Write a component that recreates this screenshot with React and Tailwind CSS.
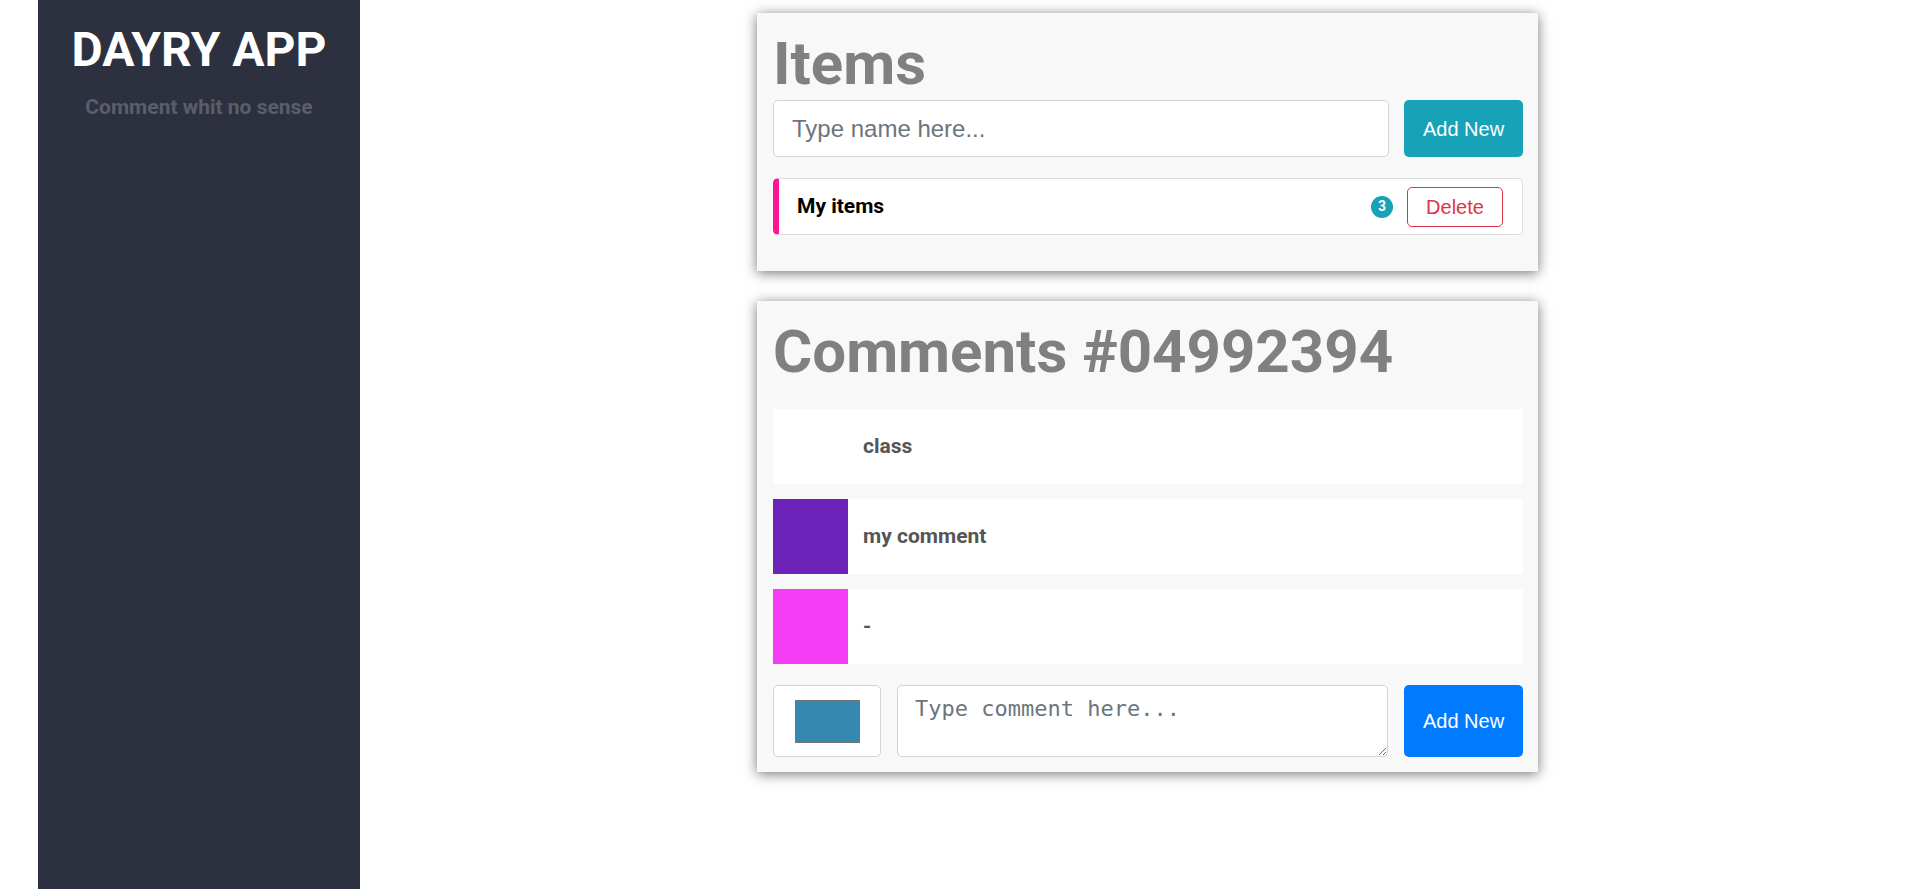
import React from "react";

const rows = [
  { color: "transparent", text: "class" },
  { color: "#6c21b9", text: "my comment" },
  { color: "#f33cf3", text: "-" },
];

export default function App() {
  return (
    <div className="flex min-h-screen bg-white" style={{ fontFamily: "Roboto, 'Liberation Sans', sans-serif" }}>
      <div className="w-[38px] shrink-0" />
      <aside className="w-[322px] shrink-0 bg-[#2d303e] text-center min-h-[889px]">
        <h1 className="mt-[21px] text-[48px] leading-[58px] font-bold text-white" style={{ fontFamily: "Roboto, sans-serif" }}>
          DAYRY APP
        </h1>
        <p className="mt-[16px] text-[21px] leading-[24px] font-bold text-[#5a5e6b]">Comment whit no sense</p>
      </aside>
      <main className="flex-1">
        <div className="ml-[397px] w-[781px] pt-[13px] flex flex-col gap-[30px]">
          {/* Items card */}
          <section className="bg-[#f8f8f8] shadow-[0_2px_12px_rgba(0,0,0,0.55)] pl-4 pr-[15px] pt-[15px] pb-[36px]">
            <h2 className="text-[60px] leading-[72px] font-bold text-[#808080]">Items</h2>
            <div className="flex gap-[15px] h-[57px]">
              <input
                type="text"
                placeholder="Type name here..."
                className="flex-1 h-full rounded-[5px] border border-[#ced4da] bg-white pl-[18px] text-[24px] text-[#495057] placeholder:text-[#6c757d] outline-none"
                style={{ fontFamily: "'Liberation Sans', Arial, sans-serif" }}
              />
              <button
                className="w-[119px] h-full rounded-[5px] bg-[#17a2b8] text-white text-[20px]"
                style={{ fontFamily: "'Liberation Sans', Arial, sans-serif" }}
              >
                Add New
              </button>
            </div>
            <div className="mt-[21px] h-[57px] flex items-center rounded-[5px] border border-[#dcdcdc] border-l-[6px] border-l-[#ff1493] bg-white pl-[18px] pr-[19px]">
              <span className="flex-1 text-[21px] font-bold text-black">My items</span>
              <span className="w-[22px] h-[22px] rounded-full bg-[#17a2b8] text-white text-[14px] font-bold flex items-center justify-center">
                3
              </span>
              <button
                className="ml-[14px] w-[96px] h-[40px] rounded-[5px] border border-[#dc3545] text-[#dc3545] text-[20px] bg-white"
                style={{ fontFamily: "'Liberation Sans', Arial, sans-serif" }}
              >
                Delete
              </button>
            </div>
          </section>

          {/* Comments card */}
          <section className="bg-[#f8f8f8] shadow-[0_2px_12px_rgba(0,0,0,0.55)] pl-4 pr-[15px] pt-[15px] pb-[15px]">
            <h2 className="text-[60px] leading-[72px] font-bold text-[#808080]">Comments #04992394</h2>
            <div className="mt-[21px] flex flex-col gap-[15px]">
              {rows.map((r, i) => (
                <div key={i} className="flex h-[75px] bg-white items-center">
                  <div className="w-[75px] h-[75px] shrink-0" style={{ backgroundColor: r.color }} />
                  <span className="ml-[15px] text-[21px] font-bold text-[#555555]">{r.text}</span>
                </div>
              ))}
            </div>
            <div className="mt-[21px] flex gap-[16px] h-[72px]">
              <div className="w-[108px] h-full rounded-[5px] border border-[#ced4da] bg-white flex items-center justify-center">
                <div className="w-[65px] h-[43px] bg-[#3588b0] border border-[#767676]" />
              </div>
              <textarea
                placeholder="Type comment here..."
                className="flex-1 h-full rounded-[5px] border border-[#ced4da] bg-white px-[17px] py-[6px] text-[22px] leading-[33px] placeholder:text-[#6c757d] outline-none"
                style={{ fontFamily: "'DejaVu Sans Mono', monospace" }}
              />
              <button
                className="w-[119px] h-full rounded-[5px] bg-[#007bff] text-white text-[20px]"
                style={{ fontFamily: "'Liberation Sans', Arial, sans-serif" }}
              >
                Add New
              </button>
            </div>
          </section>
        </div>
      </main>
    </div>
  );
}
